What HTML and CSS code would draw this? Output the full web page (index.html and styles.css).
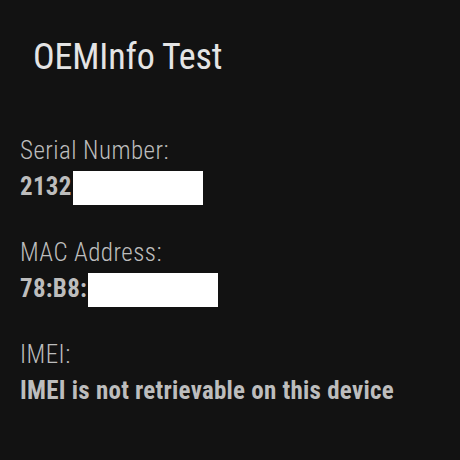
FILE: index.html
```html
<!DOCTYPE html>
<html>
<head>
<meta charset="utf-8">
<link rel="stylesheet" href="styles.css">
</head>
<body>
<div class="screen">
  <h1 class="title">OEMInfo Test</h1>
  <div class="list">
    <div class="item">
      <div class="label">Serial Number:</div>
      <div class="value">2132<span class="redact"></span></div>
    </div>
    <div class="item">
      <div class="label">MAC Address:</div>
      <div class="value">78:B8:<span class="redact"></span></div>
    </div>
    <div class="item">
      <div class="label">IMEI:</div>
      <div class="value">IMEI is not retrievable on this device</div>
    </div>
  </div>
</div>
</body>
</html>
```
FILE: styles.css
```css
html, body {
  margin: 0;
  padding: 0;
  background: #121212;
}
.screen {
  width: 460px;
  height: 460px;
  box-sizing: border-box;
  padding-top: 37px;
  font-family: Roboto, "Noto Sans", sans-serif;
  font-stretch: 87.5%;
}
.title {
  margin: 0;
  padding-left: 33px;
  font-size: 36px;
  line-height: 40px;
  font-weight: 400;
  letter-spacing: -0.15px;
  color: #e4e4e4;
}
.list {
  margin-top: 56px;
  padding-left: 20px;
  display: flex;
  flex-direction: column;
  gap: 30px;
}
.label {
  font-size: 25px;
  line-height: 36px;
  font-weight: 300;
  letter-spacing: 0.45px;
  color: #bdbdbd;
}
.value {
  font-size: 25px;
  line-height: 36px;
  font-weight: 700;
  letter-spacing: 0.25px;
  color: #bdbdbd;
  white-space: nowrap;
}
.value .redact {
  margin-left: 1px;
}
.redact {
  display: inline-block;
  width: 130px;
  height: 34px;
  background: #ffffff;
  vertical-align: bottom;
}
```
